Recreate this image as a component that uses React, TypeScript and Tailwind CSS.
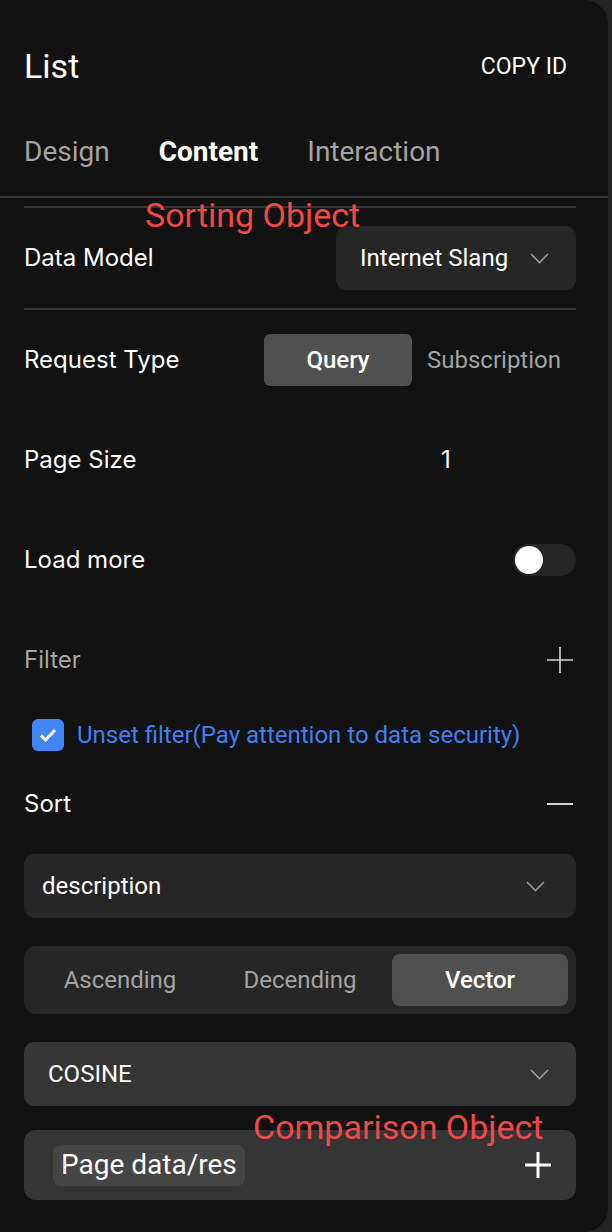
import type { ReactNode } from 'react';

const Label = ({ children, muted }: { children: ReactNode; muted?: boolean }) => (
  <span
    className={
      muted
        ? "font-['Inter',sans-serif] text-[24px] leading-none text-[#a6a6a6]"
        : "font-['Inter',sans-serif] text-[24px] leading-none text-white"
    }
  >
    {children}
  </span>
);

const Chevron = () => (
  <svg width="19" height="11" viewBox="0 0 19 11" fill="none">
    <path d="M1 1l8.5 8.5L18 1" stroke="#9a9a9a" strokeWidth="1.6" />
  </svg>
);

const Plus = ({ color, width }: { color: string; width: number }) => (
  <svg width="26" height="26" viewBox="0 0 26 26" fill="none">
    <path d="M13 0v26M0 13h26" stroke={color} strokeWidth={width} />
  </svg>
);

export default function App() {
  return (
    <div className="min-h-screen w-full bg-[#232323]">
      <div className="relative h-[1232px] w-[608px] overflow-hidden rounded-r-[24px] bg-[#121212] font-['Roboto',sans-serif] text-white">
        {/* header */}
        <div className="flex h-[132px] items-center justify-between pl-6 pr-8">
          <span className="text-[34px] leading-none">List</span>
          <span className="mr-[9px] text-[23px] leading-none">COPY ID</span>
        </div>
        <div className="flex h-10 items-center gap-[49px] px-6 text-[28px] leading-none">
          <span className="text-[#a3a3a3]">Design</span>
          <span className="font-bold">Content</span>
          <span className="text-[#a3a3a3]">Interaction</span>
        </div>
        <div className="mt-6 h-[2px] bg-[#363636]" />

        <div className="pl-6 pr-8">
          <div className="mt-2 h-[2px] bg-[#363636]" />

          {/* data model */}
          <div className="mt-[18px] flex h-16 items-center justify-between">
            <Label>Data Model</Label>
            <div className="flex h-16 w-[240px] items-center justify-between rounded-[10px] bg-[#262626] pl-6 pr-[27px]">
              <span className="text-[24px] leading-none">Internet Slang</span>
              <Chevron />
            </div>
          </div>
          <div className="mt-[18px] h-[2px] bg-[#363636]" />

          {/* request type */}
          <div className="flex h-[100px] items-center justify-between">
            <Label>Request Type</Label>
            <div className="flex w-[312px] items-center">
              <div className="flex h-[52px] w-[148px] items-center justify-center rounded-md bg-[#505050] text-[24px] font-medium leading-none">
                Query
              </div>
              <div className="flex flex-1 justify-center text-[24px] leading-none text-[#a3a3a3]">
                Subscription
              </div>
            </div>
          </div>

          {/* page size */}
          <div className="grid h-[100px] grid-cols-[417px_1fr] items-center">
            <Label>Page Size</Label>
            <span className="font-['Inter',sans-serif] text-[24px] leading-none">1</span>
          </div>

          {/* load more */}
          <div className="flex h-[100px] items-center justify-between">
            <Label>Load more</Label>
            <div className="flex h-8 w-[63px] items-center rounded-full bg-[#262626] p-[2px]">
              <div className="h-7 w-7 rounded-full bg-white" />
            </div>
          </div>

          {/* filter */}
          <div className="flex h-[100px] items-center justify-between">
            <Label muted>Filter</Label>
            <div className="mr-[3px]">
              <Plus color="#d4d4d4" width={1.6} />
            </div>
          </div>
          <div className="flex h-[50px] items-center gap-[13px] pl-2">
            <div className="flex h-8 w-8 items-center justify-center rounded-md bg-[#4285f4]">
              <svg width="18" height="14" viewBox="0 0 18 14" fill="none">
                <path d="M2 7.5l4.5 4.5L16 2" stroke="white" strokeWidth="3" />
              </svg>
            </div>
            <span className="text-[24px] leading-none text-[#3f80f0]">
              Unset filter(Pay attention to data security)
            </span>
          </div>

          {/* sort */}
          <div className="flex h-[88px] items-center justify-between">
            <Label>Sort</Label>
            <div className="mr-[3px] h-[2px] w-[26px] bg-[#cfcfcf]" />
          </div>
          <div className="mt-[6px] flex h-16 items-center justify-between rounded-[10px] bg-[#262626] pl-[18px] pr-[31px]">
            <span className="text-[24px] leading-none">description</span>
            <Chevron />
          </div>

          <div className="mt-7 grid h-[68px] grid-cols-3 gap-1 rounded-xl bg-[#262626] p-2 text-[24px] leading-none">
            <div className="flex items-center justify-center text-[#a3a3a3]">Ascending</div>
            <div className="flex items-center justify-center text-[#a3a3a3]">Decending</div>
            <div className="flex items-center justify-center rounded-lg bg-[#505050] font-medium">
              Vector
            </div>
          </div>

          <div className="mt-7 flex h-16 items-center justify-between rounded-[10px] bg-[#353535] pl-6 pr-[27px]">
            <span className="text-[24px] leading-none">COSINE</span>
            <Chevron />
          </div>

          <div className="mt-6 flex h-[70px] items-center justify-between rounded-xl bg-[#353535] pl-[29px] pr-[25px]">
            <span className="flex h-[41px] items-center rounded-lg bg-[#454545] px-2 text-[28px] leading-none">
              Page data/res
            </span>
            <Plus color="#ffffff" width={3} />
          </div>
        </div>

        {/* annotations */}
        <span className="absolute left-[145px] top-[198px] text-[34px] leading-none text-[#f04848]">
          Sorting Object
        </span>
        <span className="absolute left-[253px] top-[1110px] text-[34px] leading-none text-[#f04848]">
          Comparison Object
        </span>
      </div>
    </div>
  );
}
